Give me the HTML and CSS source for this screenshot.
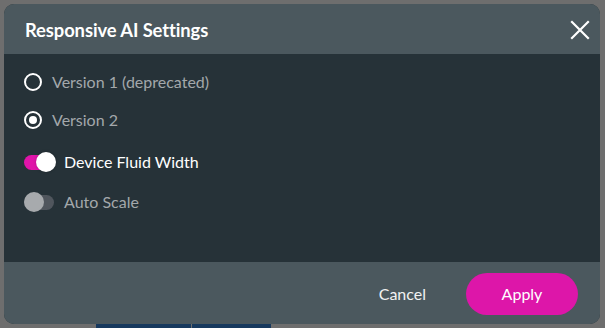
FILE: index.html
```html
<!DOCTYPE html>
<html>
<head>
<meta charset="utf-8">
<link rel="stylesheet" href="styles.css">
</head>
<body>
<div class="backdrop">
  <div class="dialog">
    <div class="header">
      <h1 class="title">Responsive AI Settings</h1>
      <button class="close" aria-label="Close">
        <svg width="20" height="20" viewBox="0 0 20 20"><path d="M2 2 L18 18 M18 2 L2 18" stroke="#fff" stroke-width="2.2" stroke-linecap="square" fill="none"/></svg>
      </button>
    </div>
    <div class="body">
      <label class="row radio-row first">
        <span class="radio"></span>
        <span class="label muted">Version 1 (deprecated)</span>
      </label>
      <label class="row radio-row">
        <span class="radio checked"></span>
        <span class="label muted">Version 2</span>
      </label>
      <label class="row toggle-row">
        <span class="toggle on"><span class="knob"></span></span>
        <span class="label bright">Device Fluid Width</span>
      </label>
      <label class="row toggle-row">
        <span class="toggle off"><span class="knob"></span></span>
        <span class="label muted">Auto Scale</span>
      </label>
    </div>
    <div class="footer">
      <button class="cancel">Cancel</button>
      <button class="apply">Apply</button>
    </div>
  </div>
  <div class="under">
    <span class="tab"></span><span class="tab short"></span>
  </div>
</div>
</body>
</html>
```

FILE: styles.css
```css
html, body {
  margin: 0;
  padding: 0;
  width: 605px;
  height: 328px;
  overflow: hidden;
  background: #6e6e6e;
  font-family: Lato, "Noto Sans", sans-serif;
}
.backdrop {
  padding: 4px 5px 0 4px;
  height: 328px;
  box-sizing: border-box;
  display: flex;
  flex-direction: column;
}
.dialog {
  width: 596px;
  height: 320px;
  border-radius: 10px;
  overflow: hidden;
  display: flex;
  flex-direction: column;
  background: #263238;
}
.header {
  height: 50px;
  background: #4b585e;
  display: flex;
  align-items: center;
  justify-content: space-between;
  padding: 0 10px 0 21px;
  box-sizing: border-box;
}
.title {
  margin: 0;
  color: #ffffff;
  font-size: 18.4px;
  font-weight: 700;
  letter-spacing: -0.1px;
  padding-top: 2px;
}
.close {
  background: none;
  border: 0;
  padding: 0;
  width: 20px;
  height: 20px;
  display: flex;
  cursor: pointer;
  margin-top: 2px;
}
.body {
  height: 208px;
  background: #263238;
  padding: 0 0 0 20px;
  box-sizing: border-box;
  display: flex;
  flex-direction: column;
}
.row {
  display: flex;
  align-items: center;
}
.radio-row.first { margin-top: 18px; }
.radio-row { height: 20px; margin-bottom: 18px; }
.radio-row + .radio-row { margin-bottom: 22px; }
.radio {
  width: 18px;
  height: 18px;
  box-sizing: border-box;
  border: 2px solid #ffffff;
  border-radius: 50%;
  margin-right: 10px;
  display: flex;
  align-items: center;
  justify-content: center;
}
.radio.checked::after {
  content: "";
  width: 8px;
  height: 8px;
  border-radius: 50%;
  background: #ffffff;
}
.label {
  font-size: 16px;
  line-height: 20px;
}
.muted { color: #a3a8ab; }
.bright { color: #ffffff; }
.toggle-row { height: 20px; margin-bottom: 20px; }
.toggle {
  width: 30px;
  height: 15px;
  border-radius: 8px;
  margin-right: 10px;
  display: flex;
  align-items: center;
}
.toggle.on { background: #e014a9; justify-content: flex-end; }
.toggle.off { background: #50565d; justify-content: flex-start; }
.knob {
  width: 20px;
  height: 20px;
  border-radius: 50%;
  flex: none;
}
.toggle.on .knob { background: #ffffff; margin-right: -2px; box-shadow: 0 0 3px rgba(0,0,0,0.25); }
.toggle.off .knob { background: #a7aaad; }
.footer {
  flex: 1;
  background: #4b585e;
  display: flex;
  align-items: center;
  justify-content: flex-end;
  padding: 0 22px 0 0;
  gap: 40px;
}
.cancel {
  background: none;
  border: 0;
  color: #f2f2f2;
  font-family: Lato, "Noto Sans", sans-serif;
  font-size: 16px;
  padding: 0;
  margin-top: 1px;
}
.apply {
  width: 112px;
  height: 42px;
  border-radius: 21px;
  border: 0;
  background: #dd16a9;
  color: #ffffff;
  font-family: Lato, "Noto Sans", sans-serif;
  font-size: 16px;
  margin-top: 1px;
}
.under {
  display: flex;
  padding-left: 92px;
  gap: 1px;
}
.tab {
  width: 95px;
  height: 4px;
  background: #17395e;
}
.tab.short { width: 79px; }
```
